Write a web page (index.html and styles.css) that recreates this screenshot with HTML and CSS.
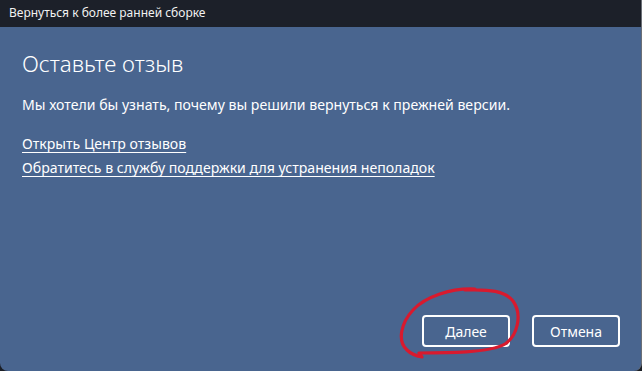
FILE: index.html
```html
<!DOCTYPE html>
<html lang="ru">
<head>
    <meta charset="UTF-8">
    <title>Вернуться к более ранней сборке</title>
    <link rel="stylesheet" href="styles.css">
</head>
<body>
    <div class="window">
        <div class="titlebar">Вернуться к более ранней сборке</div>
        <div class="content">
            <h1 class="heading">Оставьте отзыв</h1>
            <p class="lead">Мы хотели бы узнать, почему вы решили вернуться к прежней версии.</p>
            <div class="links">
                <a href="#" class="link">Открыть Центр отзывов</a>
                <a href="#" class="link">Обратитесь в службу поддержки для устранения неполадок</a>
            </div>
            <div class="footer">
                <button class="btn">Далее</button>
                <button class="btn">Отмена</button>
            </div>
        </div>
        <!-- red marker scribble around the Next button -->
        <svg class="scribble" width="135" height="80" viewBox="0 0 135 80">
            <path d="M80 4 C 55 3, 30 12, 18 25 C 6 38, 2 56, 12 65 C 16 69, 22 71, 27 72 L 24 68 C 50 68, 95 68, 110 59 C 122 51, 128 30, 118 16 C 110 6, 95 4, 70 5" fill="none" stroke="#d81a2e" stroke-width="3.2" stroke-linecap="round" stroke-linejoin="round"/>
        </svg>
    </div>
</body>
</html>
```

FILE: styles.css
```css
html, body {
    margin: 0;
    padding: 0;
    background: #1b1f26;
}

body {
    width: 642px;
    height: 371px;
    overflow: hidden;
    font-family: 'Noto Sans', 'Open Sans', sans-serif;
    color: #ffffff;
}

.window {
    position: relative;
    width: 641px;
    height: 371px;
    display: flex;
    flex-direction: column;
    border-right: 1px solid #6b6f76;
    border-radius: 0 0 8px 8px;
    overflow: hidden;
    background: #49658f;
}

.titlebar {
    height: 27px;
    flex: none;
    background: #1c2029;
    color: #f2f2f2;
    font-size: 12px;
    line-height: 25px;
    padding-left: 9px;
}

.content {
    flex: 1;
    display: flex;
    flex-direction: column;
    padding: 22px 21px 24px 22px;
}

.heading {
    margin: 0;
    font-size: 22.4px;
    font-weight: 300;
    line-height: 30px;
}

.lead {
    margin: 16px 0 0 0;
    font-size: 14.1px;
    line-height: 20px;
}

.links {
    display: flex;
    flex-direction: column;
    align-items: flex-start;
    gap: 4px;
    margin-top: 19px;
}

.link {
    color: #ffffff;
    font-size: 14.1px;
    line-height: 20px;
    text-decoration: underline;
    text-underline-offset: 3px;
}

.footer {
    margin-top: auto;
    display: flex;
    justify-content: flex-end;
    gap: 22px;
}

.btn {
    width: 88px;
    height: 32px;
    background: transparent;
    border: 2px solid #ffffff;
    border-radius: 4px;
    color: #ffffff;
    font-family: inherit;
    font-size: 14px;
    padding: 0;
}

.scribble {
    position: absolute;
    left: 395px;
    top: 285px;
}
```
